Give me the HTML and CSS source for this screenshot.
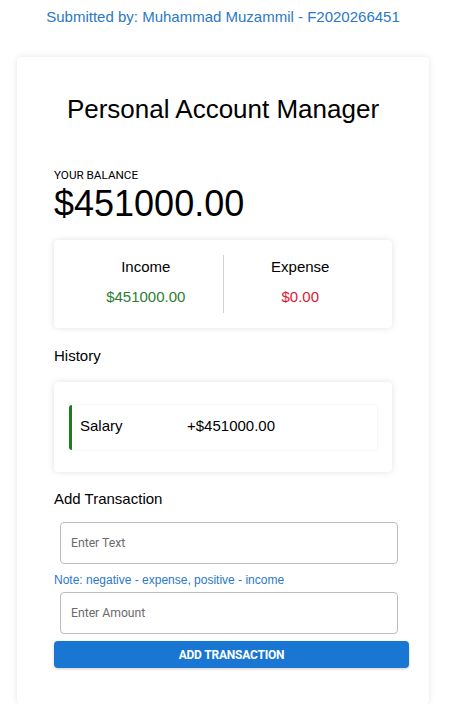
FILE: index.html
```html
<!DOCTYPE html>
<html>
<head>
<meta charset="utf-8">
<link rel="stylesheet" href="styles.css">
</head>
<body>
<div class="page">
  <p class="submitted">Submitted by: Muhammad Muzammil - F2020266451</p>
  <div class="card">
    <h1 class="title">Personal Account Manager</h1>
    <div class="balance-label">YOUR BALANCE</div>
    <div class="balance">$451000.00</div>
    <div class="summary">
      <div class="col">
        <div class="col-title">Income</div>
        <div class="amount income">$451000.00</div>
      </div>
      <div class="col">
        <div class="col-title">Expense</div>
        <div class="amount expense">$0.00</div>
      </div>
    </div>
    <div class="section-title history-title">History</div>
    <div class="history">
      <div class="item plus">
        <span class="item-name">Salary</span>
        <span class="item-amount">+$451000.00</span>
      </div>
    </div>
    <div class="section-title add-title">Add Transaction</div>
    <div class="field"><input class="input" type="text" placeholder="Enter Text"></div>
    <div class="note">Note: negative - expense, positive - income</div>
    <div class="field"><input class="input" type="text" placeholder="Enter Amount"></div>
    <button class="btn">ADD TRANSACTION</button>
  </div>
</div>
</body>
</html>
```

FILE: styles.css
```css
* { box-sizing: border-box; }
body {
  margin: 8px 0 0 0;
  font-family: "Liberation Sans", Arial, sans-serif;
  background: #fff;
  color: #000;
}
.page {
  margin-left: 17px;
  width: 412px;
}
.submitted {
  margin: 0;
  text-align: center;
  font-size: 15px;
  line-height: 18px;
  color: #2a78c6;
}
.card {
  margin-top: 31px;
  background: #fff;
  border-radius: 4px;
  box-shadow: 0 0 6px rgba(0,0,0,0.1);
  padding: 37px 37px 36px 37px;
  display: flex;
  flex-direction: column;
}
.title {
  margin: 0;
  text-align: center;
  font-weight: 400;
  font-size: 26px;
  line-height: 30px;
}
.balance-label {
  margin-top: 44px;
  font-family: Roboto, sans-serif;
  font-size: 11.7px;
  line-height: 14px;
}
.balance {
  margin-top: 2px;
  font-size: 36px;
  line-height: 40px;
}
.summary {
  margin-top: 16px;
  display: flex;
  padding: 15px;
  border-radius: 4px;
  box-shadow: 0 0 6px rgba(0,0,0,0.12);
}
.col {
  flex: 1;
  text-align: center;
  padding-top: 3px;
  height: 58px;
}
.col + .col { border-left: 1px solid #d0d0d0; }
.col-title {
  font-size: 15px;
  line-height: 18px;
}
.amount {
  margin-top: 12px;
  font-size: 15px;
  line-height: 17px;
}
.income { color: #2e7d32; }
.expense { color: #e0182f; }
.section-title {
  font-size: 15px;
  line-height: 18px;
}
.history-title { margin-top: 19px; }
.history {
  margin-top: 17px;
  padding: 23px 15px 22px 15px;
  border-radius: 4px;
  box-shadow: 0 0 6px rgba(0,0,0,0.12);
}
.item {
  display: flex;
  padding: 12px 0 15px 8px;
  border-left: 3px solid #237a23;
  border-radius: 3px;
  box-shadow: 0 0 3px rgba(0,0,0,0.08);
  font-size: 15px;
  line-height: 18px;
}
.item-name { width: 107px; }
.add-title { margin-top: 18px; }
.field { padding-left: 6px; }
.input {
  display: block;
  width: 338px;
  height: 42px;
  margin: 0;
  border: 1px solid #bdbdbd;
  border-radius: 4px;
  padding: 0 10px;
  font-family: Roboto, sans-serif;
  font-size: 12.2px;
  color: #000;
  background: #fff;
  outline: none;
}
.input::placeholder { color: #6b6b6b; }
.add-title + .field { margin-top: 14px; }
.note {
  margin-top: 9px;
  font-size: 12px;
  line-height: 14px;
  color: #2a78c6;
}
.note + .field { margin-top: 5px; }
.btn {
  margin-top: 7px;
  width: 355px;
  height: 27px;
  border: none;
  border-radius: 4px;
  background: #1976d2;
  color: #fff;
  font-family: Roboto, sans-serif;
  font-weight: 700;
  font-size: 12px;
  letter-spacing: -0.2px;
  box-shadow: 0 1px 3px rgba(0,0,0,0.2);
  padding: 0;
}
```
